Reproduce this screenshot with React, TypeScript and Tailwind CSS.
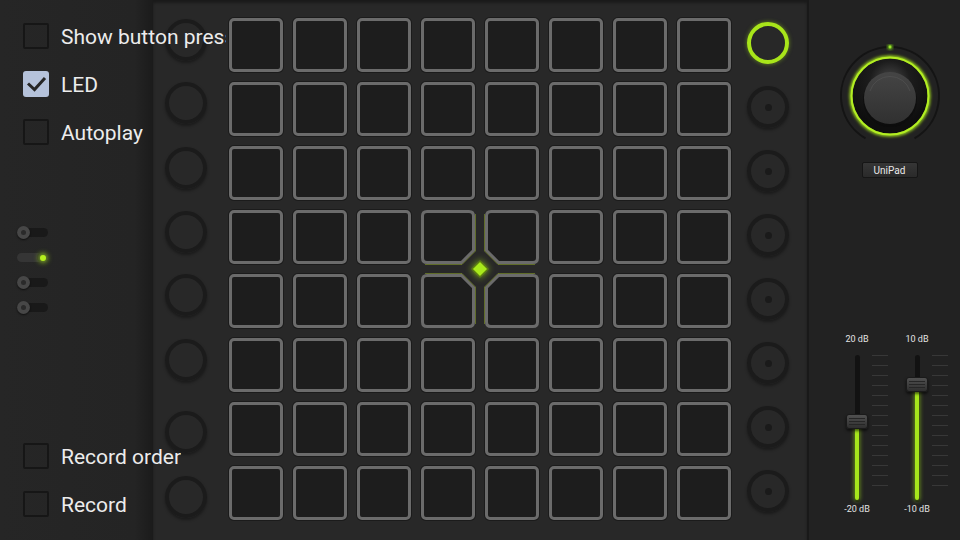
import React from "react";

const leftCircleGaps = ["", "mt-[21px]", "mt-[23px]", "mt-[22px]", "mt-[21px]", "mt-[23px]", "mt-[30px]", "mt-[23px]"];

function Checkbox({ checked }: { checked?: boolean }) {
  if (checked) {
    return (
      <div className="w-[26px] h-[26px] shrink-0 rounded-[3px] bg-[#b5c2da]">
        <svg width="26" height="26" viewBox="0 0 26 26">
          <path d="M5 12.5 L11.5 18.5 L22 7" fill="none" stroke="#262626" strokeWidth="3" />
        </svg>
      </div>
    );
  }
  return <div className="w-[26px] h-[26px] shrink-0 rounded-[2px] border-2 border-[#161616]" />;
}

function CheckRow({ label, checked, className = "" }: { label: string; checked?: boolean; className?: string }) {
  return (
    <div className={`flex items-center w-max h-[26px] ml-[6px] ${className}`}>
      <Checkbox checked={checked} />
      <span className="ml-[12px] shrink-0 max-w-[165px] overflow-hidden whitespace-nowrap text-[21px] leading-[28px] pt-[1px] text-[#ececec]">
        {label}
      </span>
    </div>
  );
}

function Toggle({ on }: { on?: boolean }) {
  return (
    <div className="relative w-[31px] h-[13px] flex items-center">
      <div className={`w-full h-[9px] rounded-full ${on ? "bg-[#353535]" : "bg-[#191919]"}`} />
      {on ? (
        <div className="absolute right-[0px] top-[1px] w-[11px] h-[11px] rounded-full bg-[#2a2a2a] flex items-center justify-center">
          <div className="w-[6px] h-[6px] rounded-full bg-[#b4f01e] shadow-[0_0_5px_2px_rgba(170,235,30,0.6)]" />
        </div>
      ) : (
        <div className="absolute left-0 top-0 w-[13px] h-[13px] rounded-full bg-[#474747] shadow-[0_1px_2px_rgba(0,0,0,0.6)] flex items-center justify-center">
          <div className="w-[5px] h-[5px] rounded-full bg-[#2a2a2a]" />
        </div>
      )}
    </div>
  );
}

function Pad() {
  return (
    <div className="w-[54px] h-[54px] rounded-[5px] border-[3px] border-[#6b6b6b] bg-[#1d1d1d] shadow-[0_0_0_1px_#1b1b1b]" />
  );
}

// pad with its corner cut towards the centre diamond
function ChamferPad({ flip }: { flip: string }) {
  return (
    <svg width="54" height="54" viewBox="0 0 54 54" className="overflow-visible">
      <g transform={flip}>
        <path
          d="M6 1.5 H48 Q52.5 1.5 52.5 6 V40.5 L40.5 52.5 H6 Q1.5 52.5 1.5 48 V6 Q1.5 1.5 6 1.5 Z"
          fill="#1d1d1d"
          stroke="#6b6b6b"
          strokeWidth="3"
        />
        <path d="M54.5 4 V41 L41 54.5 H4" fill="none" stroke="#8ea52a" strokeWidth="1" opacity="0.55" />
      </g>
    </svg>
  );
}

function Knob() {
  return (
    <svg width="104" height="104" viewBox="0 0 104 104">
      <defs>
        <radialGradient id="well" cx="50%" cy="30%" r="60%">
          <stop offset="0%" stopColor="#4a4a4a" />
          <stop offset="45%" stopColor="#1c1c1c" />
          <stop offset="100%" stopColor="#0e0e0e" />
        </radialGradient>
        <linearGradient id="cap" x1="0" y1="0" x2="0" y2="1">
          <stop offset="0%" stopColor="#454545" />
          <stop offset="100%" stopColor="#303030" />
        </linearGradient>
        <filter id="glow" x="-20%" y="-20%" width="140%" height="140%">
          <feGaussianBlur stdDeviation="1.6" />
        </filter>
      </defs>
      <path d="M27.5 94.4 A49 49 0 1 1 76.5 94.4" fill="none" stroke="#141414" strokeWidth="2" />
      <circle cx="52" cy="3" r="2.5" fill="#7fd61a" filter="url(#glow)" />
      <circle cx="52" cy="3" r="1.4" fill="#9be82a" />
      <circle cx="52" cy="52" r="39" fill="none" stroke="#a6e31a" strokeWidth="3" filter="url(#glow)" />
      <circle cx="52" cy="52" r="37.5" fill="url(#well)" />
      <circle cx="52" cy="52" r="38.5" fill="none" stroke="#b2ee22" strokeWidth="2" />
      <circle cx="52" cy="56" r="27" fill="#0c0c0c" opacity="0.6" />
      <circle cx="52" cy="54" r="26" fill="url(#cap)" />
      <path d="M32 47 A21 21 0 0 1 72 47" fill="none" stroke="#555555" strokeWidth="1" opacity="0.6" />
    </svg>
  );
}

function Fader({ top, label, bottom }: { top: number; label: string; bottom: string }) {
  return (
    <div className="flex">
      <div className="flex flex-col items-center w-[24px]">
        <span className="text-[9px] leading-[12px] text-[#e4e4e4] whitespace-nowrap">{label}</span>
        <div className="relative mt-[10px] h-[147px] w-[24px] flex justify-center">
          <div className="w-[5px] h-full rounded-full bg-[#121212]" />
          <div
            className="absolute left-[10px] w-[4px] bottom-[2px] rounded-full bg-[#a6e61c] shadow-[0_0_4px_1px_rgba(160,225,25,0.55)]"
            style={{ top: top + 12 }}
          />
          <div
            className="absolute left-[1px] w-[22px] h-[15px] rounded-[3px] border border-[#1a1a1a] bg-[linear-gradient(#505050,#2f2f2f)] shadow-[0_2px_3px_rgba(0,0,0,0.6)] flex flex-col items-center justify-center gap-[2px]"
            style={{ top }}
          >
            <div className="w-[16px] h-px bg-[#262626]" />
            <div className="w-[16px] h-px bg-[#262626]" />
            <div className="w-[16px] h-px bg-[#262626]" />
          </div>
        </div>
        <span className="mt-[1px] text-[9px] leading-[12px] text-[#e4e4e4] whitespace-nowrap">{bottom}</span>
      </div>
      <div className="ml-[3px] w-[16px] pt-[22px] flex flex-col gap-[9px]">
        {Array.from({ length: 14 }).map((_, i) => (
          <div key={i} className="h-px bg-[#383838]" />
        ))}
      </div>
    </div>
  );
}

export default function App() {
  const pads = [];
  for (let r = 0; r < 8; r++) {
    for (let c = 0; c < 8; c++) {
      let el = <Pad />;
      if (r === 3 && c === 3) el = <ChamferPad flip="" />;
      if (r === 3 && c === 4) el = <ChamferPad flip="translate(54 0) scale(-1 1)" />;
      if (r === 4 && c === 3) el = <ChamferPad flip="translate(0 54) scale(1 -1)" />;
      if (r === 4 && c === 4) el = <ChamferPad flip="translate(54 54) scale(-1 -1)" />;
      pads.push(<div key={`${r}-${c}`}>{el}</div>);
    }
  }

  return (
    <div className="w-[960px] h-[540px] flex overflow-hidden bg-[#252525] font-['Roboto','Noto_Sans',sans-serif]">
      {/* left settings panel */}
      <div className="relative z-10 w-[153px] h-full shrink-0 flex flex-col pl-[17px] pt-[23px] bg-[linear-gradient(to_right,#262626_0%,#242424_88%,#1b1b1b_100%)]">
        <CheckRow label="Show button press" />
        <CheckRow label="LED" checked className="mt-[22px]" />
        <CheckRow label="Autoplay" className="mt-[22px]" />
        <div className="mt-[81px] flex flex-col gap-[12px]">
          <Toggle />
          <Toggle on />
          <Toggle />
          <Toggle />
        </div>
        <CheckRow label="Record order" className="mt-[129px]" />
        <CheckRow label="Record" className="mt-[22px]" />
      </div>

      {/* launchpad */}
      <div className="w-[654px] h-full shrink-0 flex items-start bg-[#282828] shadow-[inset_0_3px_3px_rgba(0,0,0,0.35)]">
        <div className="ml-[12px] pt-[19px] flex flex-col w-[42px]">
          {leftCircleGaps.map((g, i) => (
            <div
              key={i}
              className={`w-[42px] h-[42px] rounded-full border-[4px] border-[#1b1b1b] shadow-[0_2px_3px_rgba(0,0,0,0.35)] ${g}`}
            />
          ))}
        </div>
        <div className="relative ml-[22px] mt-[18px] grid grid-cols-[repeat(8,54px)] gap-[10px]">
          {pads}
          <div className="absolute left-1/2 top-1/2 -translate-x-1/2 -translate-y-1/2 w-[12px] h-[12px] rotate-45 bg-[#a8e81c] border border-[#52700e] shadow-[0_0_6px_1px_rgba(166,230,25,0.55)]" />
        </div>
        <div className="ml-[16px] pt-[22px] flex flex-col gap-[22px]">
          <div className="w-[42px] h-[42px] rounded-full border-[4px] border-[#a8e51a] shadow-[0_0_4px_rgba(166,230,25,0.5)]" />
          {Array.from({ length: 7 }).map((_, i) => (
            <div
              key={i}
              className="w-[42px] h-[42px] rounded-full border-[4px] border-[#1b1b1b] shadow-[0_2px_3px_rgba(0,0,0,0.35)] flex items-center justify-center"
            >
              <div className="w-[7px] h-[7px] rounded-full bg-[#1a1a1a]" />
            </div>
          ))}
        </div>
      </div>

      {/* right mixer panel */}
      <div className="w-[153px] h-full shrink-0 flex flex-col items-center pl-[10px] pt-[44px] bg-[#222222] border-l-2 border-[#191919]">
        <Knob />
        <div className="mt-[14px] w-[56px] h-[16px] rounded-[2px] border border-[#161616] bg-[linear-gradient(#363636,#2a2a2a)] flex items-center justify-center text-[10px] text-[#e8e8e8]">
          UniPad
        </div>
        <div className="mt-[155px] ml-[14px] flex gap-[17px]">
          <Fader top={59} label="20 dB" bottom="-20 dB" />
          <Fader top={22} label="10 dB" bottom="-10 dB" />
        </div>
      </div>
    </div>
  );
}
